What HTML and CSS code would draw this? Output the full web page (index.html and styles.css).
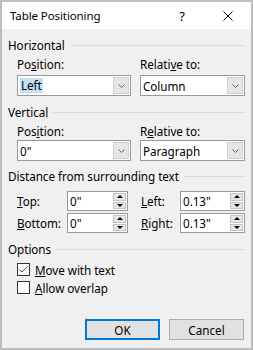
FILE: index.html
```html
<!DOCTYPE html>
<html lang="en">
<head>
    <meta charset="UTF-8">
    <title>Table Positioning</title>
    <link rel="stylesheet" href="styles.css">
</head>
<body>
    <div class="dialog">
        <!-- title bar -->
        <div class="titlebar">
            <span class="title">Table Positioning</span>
            <span class="help">?</span>
            <span class="close">
                <svg width="10" height="10" viewBox="0 0 10 10"><path d="M0.5 0.5L9.5 9.5M9.5 0.5L0.5 9.5" stroke="#000" stroke-width="1" fill="none"/></svg>
            </span>
        </div>

        <div class="content">
            <!-- Horizontal -->
            <div class="group-head">Horizontal</div>
            <div class="pair">
                <div class="field">
                    <label>Po<u>s</u>ition:</label>
                    <div class="combo top3">
                        <span class="value"><span class="selected">Left</span></span>
                        <span class="arrow"><svg width="7" height="4" viewBox="0 0 7 4"><path d="M0.5 0.5L3.5 3.5L6.5 0.5" stroke="#606060" fill="none"/></svg></span>
                    </div>
                </div>
                <div class="field">
                    <label>Relati<u>v</u>e to:</label>
                    <div class="combo top3">
                        <span class="value">Column</span>
                        <span class="arrow"><svg width="7" height="4" viewBox="0 0 7 4"><path d="M0.5 0.5L3.5 3.5L6.5 0.5" stroke="#606060" fill="none"/></svg></span>
                    </div>
                </div>
            </div>

            <!-- Vertical -->
            <div class="group-head">Vertical</div>
            <div class="pair">
                <div class="field">
                    <label>Pos<u>i</u>tion:</label>
                    <div class="combo top1">
                        <span class="value">0"</span>
                        <span class="arrow"><svg width="7" height="4" viewBox="0 0 7 4"><path d="M0.5 0.5L3.5 3.5L6.5 0.5" stroke="#606060" fill="none"/></svg></span>
                    </div>
                </div>
                <div class="field">
                    <label>R<u>e</u>lative to:</label>
                    <div class="combo top1">
                        <span class="value">Paragraph</span>
                        <span class="arrow"><svg width="7" height="4" viewBox="0 0 7 4"><path d="M0.5 0.5L3.5 3.5L6.5 0.5" stroke="#606060" fill="none"/></svg></span>
                    </div>
                </div>
            </div>

            <!-- Distance -->
            <div class="group-head dist-head">Distance from surrounding text</div>
            <div class="dist">
                <span class="lbl"><u>T</u>op:</span>
                <div class="spin"><span class="value">0"</span><span class="btns"><span class="up"></span><span class="down"></span></span></div>
                <span class="lbl right"><u>L</u>eft:</span>
                <div class="spin"><span class="value">0.13"</span><span class="btns"><span class="up"></span><span class="down"></span></span></div>

                <span class="lbl"><u>B</u>ottom:</span>
                <div class="spin"><span class="value">0"</span><span class="btns"><span class="up"></span><span class="down"></span></span></div>
                <span class="lbl right"><u>R</u>ight:</span>
                <div class="spin"><span class="value">0.13"</span><span class="btns"><span class="up"></span><span class="down"></span></span></div>
            </div>

            <!-- Options -->
            <div class="group-head opt-head">Options</div>
            <div class="checks">
                <div class="check-row">
                    <span class="box"><svg width="11" height="11" viewBox="0 0 11 11"><path d="M1.5 5.5L4 8L9.5 2.5" stroke="#555" stroke-width="1" fill="none"/></svg></span>
                    <span><u>M</u>ove with text</span>
                </div>
                <div class="check-row">
                    <span class="box"></span>
                    <span><u>A</u>llow overlap</span>
                </div>
            </div>

            <div class="buttons">
                <button class="btn default">OK</button>
                <button class="btn">Cancel</button>
            </div>
        </div>
    </div>
</body>
</html>
```

FILE: styles.css
```css
/* dialog frame */
* {
    box-sizing: border-box;
}

body {
    margin: 0;
    font-family: "Noto Sans", "Segoe UI", sans-serif;
    font-size: 11.7px;
    letter-spacing: -0.05px;
    color: #000;
    background: #fff;
}

.dialog {
    width: 253px;
    height: 350px;
    border: 2px solid #bdbdbd;
    background: #f0f0f0;
    display: flex;
    flex-direction: column;
}

.titlebar {
    height: 27px;
    flex-shrink: 0;
    background: #fff;
    display: flex;
    align-items: center;
}

.title {
    flex: 1;
    padding-left: 8px;
    font-size: 11.5px;
    letter-spacing: -0.1px;
}

.help {
    width: 46px;
    text-align: center;
    font-size: 13px;
}

.close {
    width: 46px;
    display: flex;
    justify-content: center;
}

.content {
    flex: 1;
    padding: 0 6px;
    display: flex;
    flex-direction: column;
}

/* group headings with rule */
.group-head {
    height: 16px;
    margin-top: 8px;
    display: flex;
    align-items: center;
    gap: 5px;
}

.group-head::after {
    content: "";
    flex: 1;
    height: 1px;
    background: #dcdcdc;
}

.dist-head {
    margin-top: 7px;
}

/* label + combo pairs */
.pair {
    display: grid;
    grid-template-columns: 114px 105px;
    column-gap: 9px;
    margin-left: 9px;
}

.field label {
    display: block;
    height: 15px;
    line-height: 15px;
    margin-top: 4px;
}

.combo {
    height: 21px;
    border: 1px solid #999;
    background: #fff;
    display: flex;
}

.top3 {
    margin-top: 3px;
}

.top1 {
    margin-top: 1px;
}

.combo .value {
    flex: 1;
    display: flex;
    align-items: center;
    padding-left: 2px;
}

.selected {
    background: #c4e0f6;
    padding: 0 1px;
    line-height: 15px;
}

.arrow {
    width: 16px;
    margin: 1px 1px 1px 0;
    background: #e5e5e5;
    border: 1px solid #d0d0d0;
    display: flex;
    align-items: center;
    justify-content: center;
}

/* spin boxes */
.dist {
    display: grid;
    grid-template-columns: 50px 61px 52px 65px;
    row-gap: 2px;
    align-items: center;
    margin-left: 9px;
    margin-top: 7px;
}

.lbl.right {
    padding-left: 13px;
}

.spin {
    height: 20px;
    border: 1px solid #999;
    background: #fff;
    display: flex;
}

.spin .value {
    flex: 1;
    display: flex;
    align-items: center;
    padding-left: 2px;
}

.btns {
    width: 13px;
    margin: 1px 1px 1px 0;
    display: flex;
    flex-direction: column;
    gap: 1px;
}

.up, .down {
    flex: 1;
    background: #e5e5e5;
    border: 1px solid #c4c4c4;
    display: flex;
    align-items: center;
    justify-content: center;
}

.up::before {
    content: "";
    border-left: 3px solid transparent;
    border-right: 3px solid transparent;
    border-bottom: 3px solid #000;
}

.down::before {
    content: "";
    border-left: 3px solid transparent;
    border-right: 3px solid transparent;
    border-top: 3px solid #000;
}

/* options */
.opt-head {
    margin-top: 8px;
}

.checks {
    margin-top: 3.5px;
    margin-left: 9px;
}

.check-row {
    height: 18px;
    display: flex;
    align-items: center;
    gap: 5px;
}

.box {
    width: 13px;
    height: 13px;
    border: 1px solid #333;
    background: #fff;
    display: flex;
}

/* buttons */
.buttons {
    display: flex;
    justify-content: flex-end;
    gap: 9px;
    margin-top: 22.5px;
    padding-right: 1px;
}

.btn {
    width: 75px;
    height: 21px;
    border: 1px solid #adadad;
    background: #e1e1e1;
    font: inherit;
    color: #000;
    padding: 0;
}

.btn.default {
    border: 2px solid #0078d7;
}
```
